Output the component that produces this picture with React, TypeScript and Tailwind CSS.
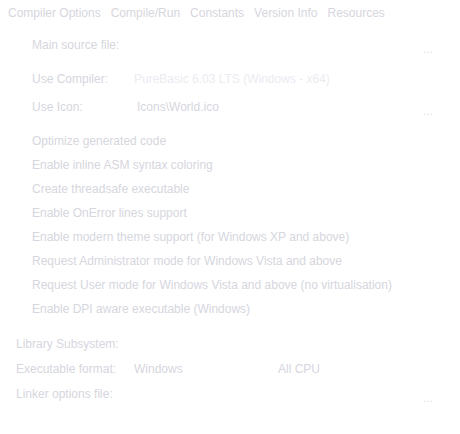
import React from "react";

const tabs = ["Compiler Options", "Compile/Run", "Constants", "Version Info", "Resources"];

const options = [
  "Optimize generated code",
  "Enable inline ASM syntax coloring",
  "Create threadsafe executable",
  "Enable OnError lines support",
  "Enable modern theme support (for Windows XP and above)",
  "Request Administrator mode for Windows Vista and above",
  "Request User mode for Windows Vista and above (no virtualisation)",
  "Enable DPI aware executable (Windows)",
];

const Dots = () => (
  <span className="ml-auto mr-[27px] mt-[8px] text-[12px] leading-none text-[#e2e2ea]">...</span>
);

const App = () => {
  return (
    <div
      className="w-[460px] h-[434px] bg-white text-[12px] text-[#d6d6de] overflow-hidden"
      style={{ fontFamily: '"Liberation Sans", Arial, sans-serif' }}
    >
      {/* Tabs */}
      <div className="h-[26px] flex items-center pl-[8px] gap-[10px]">
        {tabs.map((t) => (
          <span key={t} className="leading-none">
            {t}
          </span>
        ))}
      </div>

      {/* Top section */}
      <div className="pl-[32px] flex flex-col">
        <div className="mt-[7px] h-6 flex items-center">
          <span>Main source file:</span>
          <Dots />
        </div>

        <div className="mt-[10px] h-6 flex items-center">
          <span className="w-[102px]">Use Compiler:</span>
          <span className="text-[#ebebf1]">PureBasic 6.03 LTS (Windows - x64)</span>
        </div>

        <div className="mt-[4px] h-6 flex items-center">
          <span className="w-[105px]">Use Icon:</span>
          <span>Icons\World.ico</span>
          <Dots />
        </div>

        <div className="mt-[10px] flex flex-col">
          {options.map((o) => (
            <div key={o} className="h-6 flex items-center">
              {o}
            </div>
          ))}
        </div>
      </div>

      {/* Bottom section */}
      <div className="pl-[16px] mt-[10px] flex flex-col">
        <div className="h-[25px] flex items-center">Library Subsystem:</div>
        <div className="h-[25px] flex items-center">
          <span className="w-[118px]">Executable format:</span>
          <span className="w-[144px]">Windows</span>
          <span>All CPU</span>
        </div>
        <div className="h-[25px] flex items-center">
          <span>Linker options file:</span>
          <Dots />
        </div>
      </div>
    </div>
  );
};

export default App;
